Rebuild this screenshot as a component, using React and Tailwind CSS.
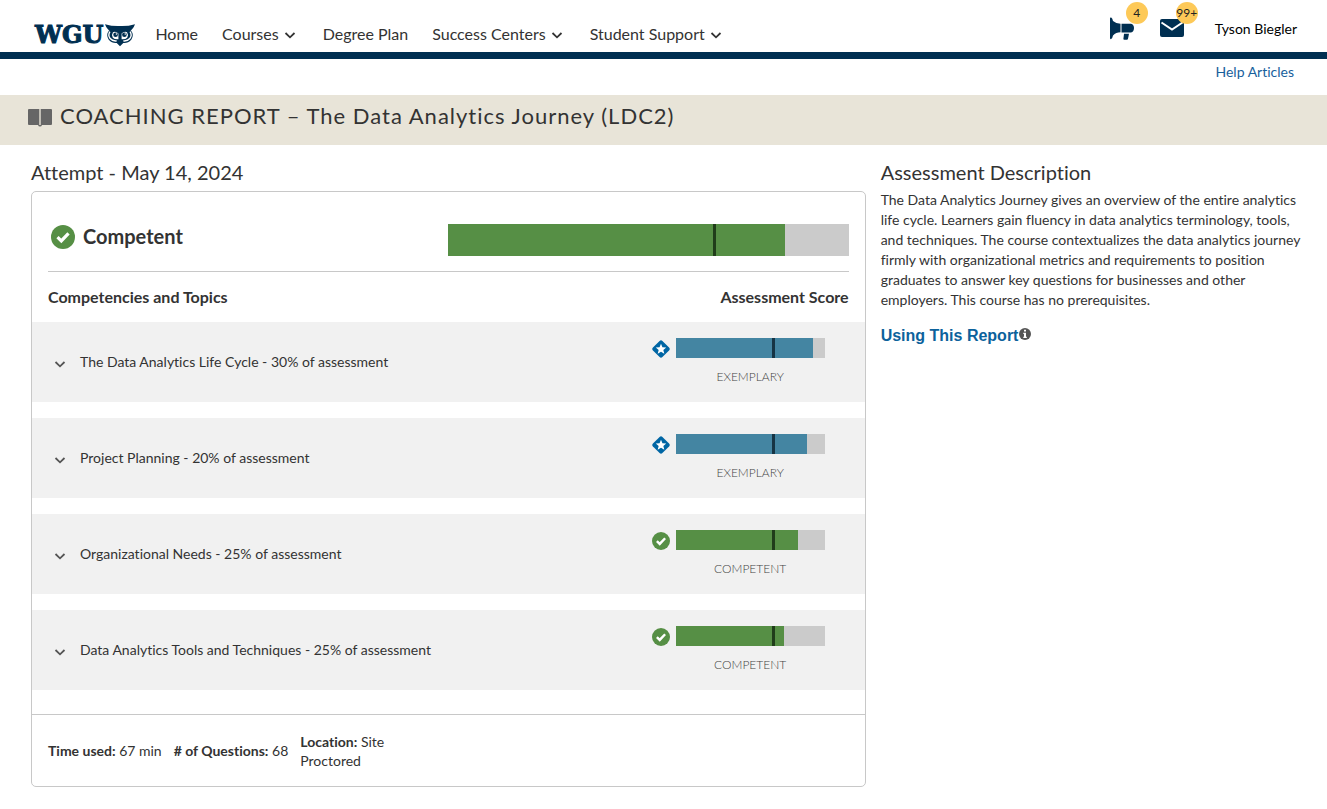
import React from "react";

const topics = [
  { name: "The Data Analytics Life Cycle - 30% of assessment", level: "EXEMPLARY", score: 92 },
  { name: "Project Planning - 20% of assessment", level: "EXEMPLARY", score: 88 },
  { name: "Organizational Needs - 25% of assessment", level: "COMPETENT", score: 82 },
  { name: "Data Analytics Tools and Techniques - 25% of assessment", level: "COMPETENT", score: 72.5 },
];

function Chevron({ className }) {
  return (
    <svg className={className} viewBox="0 0 12 8" fill="none" stroke="currentColor" strokeWidth="1.8" aria-hidden="true">
      <path d="M1.500 2 6 6.300 10.500 2" />
    </svg>
  );
}

function CheckCircle({ className }) {
  return (
    <svg className={className} viewBox="0 0 24 24" aria-hidden="true">
      <circle cx="12" cy="12" r="12" fill="#568f45" />
      <path d="M6.500 12.200l3.800 3.700 7.200-7.600" fill="none" stroke="#fff" strokeWidth="3.200" />
    </svg>
  );
}

function StarDiamond({ className }) {
  return (
    <svg className={className} viewBox="0 0 18 18" aria-hidden="true">
      <rect x="2.300" y="2.300" width="13.400" height="13.400" rx="2" transform="rotate(45 9 9)" fill="#0066a4" />
      <path d="M9 3.800l1.450 3.500 3.750.3-2.850 2.400.95 3.700L9 11.700l-3.300 2 .95-3.700L3.800 7.600l3.750-.3z" fill="#fff" />
    </svg>
  );
}

function Owl() {
  return (
    <svg className="h-6 w-[30px]" viewBox="0 0 32 24" aria-hidden="true">
      <path d="M0 0.500Q8 2.800 16 2.400 24 2.800 32 0.500 30 6 26 8L20 7.800 16 10 12 7.800 6 8Q2 6 0 .5z" fill="#002f51" />
      <path d="M4.500 7Q.5 12 4 17 7.500 21 12.500 20.500L16 24l3.500-3.500Q24.500 21 28 17 31.500 12 27.500 7z" fill="#002f51" />
      <g fill="none" stroke="#fff" strokeWidth="1.500">
        <path d="M5.200 8.500Q2.800 12.500 5.500 15.800 8 18.800 12.500 18.300M26.800 8.500Q29.200 12.500 26.500 15.800 24 18.800 19.500 18.300" />
      </g>
      <path d="M8.500 9Q11.500 7.600 14.300 10.300V16.500Q10.500 17 8.300 14.800 6.500 12 8.500 9zM23.500 9Q20.500 7.600 17.700 10.300V16.500Q21.500 17 23.700 14.800 25.500 12 23.500 9z" fill="#fff" />
      <circle cx="11.300" cy="11.700" r="2.500" fill="#002f51" />
      <circle cx="20.700" cy="11.700" r="2.500" fill="#002f51" />
      <circle cx="12.200" cy="10.800" r=".8" fill="#fff" />
      <circle cx="21.600" cy="10.800" r=".8" fill="#fff" />
    </svg>
  );
}

function ScoreBar({ score, cut, exemplary, className }) {
  return (
    <div className={"relative bg-[#cbcbcb] " + className} role="img" aria-label={"Score " + score + "%"}>
      <div className={"h-full " + (exemplary ? "bg-[#4485a2]" : "bg-[#568f45]")} style={{ width: score + "%" }} />
      <div className={"absolute top-0 h-full w-[3px] " + (exemplary ? "bg-[#163444]" : "bg-[#203d1a]")} style={{ left: cut + "%" }} />
    </div>
  );
}

function NavMenu({ children }) {
  return (
    <button type="button" className="flex items-center gap-[5px] pr-[3px]">
      <span>{children}</span>
      <Chevron className="mt-0.5 h-2 w-3" />
    </button>
  );
}

function Topic({ name, level, score }) {
  const exemplary = level === "EXEMPLARY";
  const Icon = exemplary ? StarDiamond : CheckCircle;
  return (
    <li className="flex h-20 items-center justify-between bg-[#f1f1f1] pr-10 pl-[22px]">
      <button type="button" className="flex items-center gap-[14px] text-left">
        <Chevron className="mt-1 h-2 w-3 text-[#555]" />
        <span>{name}</span>
      </button>
      <div className="flex gap-[6px]">
        <Icon className="mt-[2px] h-[18px] w-[18px]" />
        <div className="w-[149px]">
          <ScoreBar score={score} cut={64.5} exemplary={exemplary} className="h-5" />
          <p className="mt-[10px] text-center text-xs leading-[18px] font-light text-[#444]">{level}</p>
        </div>
      </div>
    </li>
  );
}

export default function App() {
  return (
    <div className="min-h-screen bg-white font-['Lato',sans-serif] text-sm text-[#333] [font-variant-ligatures:none]">
      <header className="flex h-[59px] items-center border-b-[7px] border-[#002f51] pr-[30px] pl-[35px]">
        <a href="#home" aria-label="WGU home" className="mt-[18px] flex items-center gap-[2px] text-[#002f51]">
          <span className="font-['DejaVu_Serif','Liberation_Serif',serif] text-2xl leading-6 font-bold [-webkit-text-stroke:1px_#002f51]">WGU</span>
          <Owl />
        </a>
        <nav className="mt-4 ml-5 flex items-center gap-6 text-base">
          <a href="#home">Home</a>
          <NavMenu>Courses</NavMenu>
          <a href="#degree">Degree Plan</a>
          <NavMenu>Success Centers</NavMenu>
          <NavMenu>Student Support</NavMenu>
        </nav>
        <div className="mt-[6px] ml-auto flex items-center">
          <button type="button" aria-label="Announcements, 4" className="relative mr-[26px]">
            <svg className="h-6 w-6" viewBox="0 0 24 24" fill="#002f51" aria-hidden="true">
              <path d="M0 1.500Q0 .2 1.200.6 2.500 1.500 3 4 6 6.600 10.500 6.700v8.600Q6 15.400 3 18.500 2.500 21 1.200 22 0 22.500 0 21z" />
              <path d="M11.500 6.700H21Q24 7.500 24 11t-3 4.600h-9.500z" />
              <path d="M14 16.800h5l-1 5q-.3.900-1 .9h-2.700q-1 0-.9-1z" />
            </svg>
            <span className="absolute -top-[15px] left-4 flex h-[22px] w-[22px] items-center justify-center rounded-full bg-[#fdc958] text-xs text-[#222]">4</span>
          </button>
          <button type="button" aria-label="Messages, more than 99" className="relative mr-[31px]">
            <svg className="h-6 w-6" viewBox="0 0 24 24" aria-hidden="true">
              <rect y="2" width="24" height="18" rx="2" fill="#002f51" />
              <path d="M1.500 5.500 12 12.500l10.500-7" fill="none" stroke="#fff" strokeWidth="2" />
            </svg>
            <span className="absolute -top-[15px] left-4 flex h-[22px] w-[22px] items-center justify-center rounded-full bg-[#fdc958] text-xs text-[#222]">99+</span>
          </button>
          <span className="text-black">Tyson Biegler</span>
        </div>
      </header>

      <div className="flex h-9 items-center justify-end pr-[33px] pb-[10px]">
        <a href="#help" className="text-[#17609c]">Help Articles</a>
      </div>

      <div className="flex h-[50px] items-center gap-2 bg-[#e8e4d8] pb-[6px] pl-7">
        <svg className="h-5 w-6" viewBox="0 0 24 20" fill="#666" aria-hidden="true">
          <path d="M1 2h10.300v16H1q-1 0-1-1V3q0-1 1-1zM12.700 2H23q1 0 1 1v14q0 1-1 1h-9q-.5 1.500-2 1.500T10 18h2.700z" />
        </svg>
        <h1 className="pb-[2px] text-[22px] leading-7 tracking-[1px]">COACHING REPORT – The Data Analytics Journey (LDC2)</h1>
      </div>

      <main className="grid grid-cols-[2fr_1fr] gap-[15px] pt-[13px] pr-[29px] pb-[22px] pl-[31px]">
        <section>
          <h2 className="text-xl leading-7">Attempt - May 14, 2024</h2>
          <div className="mt-[5px] rounded-[5px] border border-[#c8c8c8]">
            <div className="mx-4 flex h-20 items-center justify-between border-b border-[#c8c8c8] pt-4">
              <div className="flex items-center gap-2 pb-[6px] pl-[3px]">
                <CheckCircle className="h-6 w-6" />
                <h3 className="pb-[2px] text-xl leading-6 font-bold">Competent</h3>
              </div>
              <ScoreBar score={84} cut={66.2} className="h-8 w-1/2" />
            </div>
            <div className="flex h-[50px] items-center justify-between px-4 text-base font-bold">
              <h4>Competencies and Topics</h4>
              <h4>Assessment Score</h4>
            </div>
            <ul className="flex flex-col gap-4">
              {topics.map((topic) => (
                <Topic key={topic.name} {...topic} />
              ))}
            </ul>
            <div className="mt-6 flex h-[72px] items-center gap-3 border-t border-[#c8c8c8] px-4 leading-[19px]">
              <p><b>Time used:</b> 67 min</p>
              <p><b># of Questions:</b> 68</p>
              <p className="w-[100px]"><b>Location:</b> Site Proctored</p>
            </div>
          </div>
        </section>
        <aside>
          <h2 className="text-xl leading-7">Assessment Description</h2>
          <p className="mt-1 -mr-2 leading-5">
            The Data Analytics Journey gives an overview of the entire analytics life cycle. Learners gain fluency in data analytics terminology, tools, and techniques. The course contextualizes the data analytics journey firmly with organizational metrics and requirements to position graduates to answer key questions for businesses and other employers. This course has no prerequisites.
          </p>
          <a href="#report" className="mt-[14px] flex items-center font-['Liberation_Sans',Arial,sans-serif] text-base font-bold text-[#0c629c]">
            Using This Report
            <svg className="mb-1 ml-px h-3 w-3" viewBox="0 0 12 12" aria-hidden="true">
              <circle cx="6" cy="6" r="6" fill="#555" />
              <path d="M5 1.800h2v1.700H5zM4.300 4.700H7v4h.8V10H4.300V8.700H5V6h-.7z" fill="#fff" />
            </svg>
          </a>
        </aside>
      </main>
    </div>
  );
}
